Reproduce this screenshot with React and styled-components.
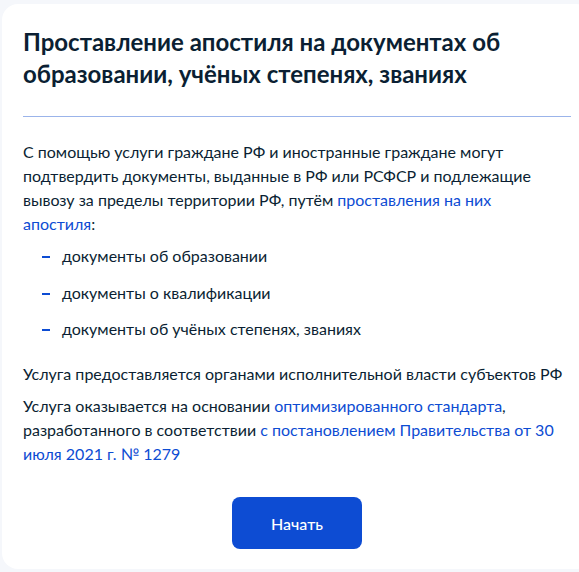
import React from "react";
import styled, { createGlobalStyle } from "styled-components";

const GlobalStyle = createGlobalStyle`
  html, body {
    margin: 0;
    padding: 0;
    background: #f5f7fb;
    overflow: hidden;
  }
  body {
    font-family: Lato, "Noto Sans", "Liberation Sans", sans-serif;
    color: #0b1f33;
    -webkit-font-smoothing: antialiased;
  }
`;

const Page = styled.div`
  padding: 4px 0 0 2px;
  height: 572px;
  box-sizing: border-box;
`;

const Card = styled.section`
  width: 590px;
  box-sizing: border-box;
  background: #ffffff;
  border-radius: 16px;
  padding: 22px 21px 20px 21px;
  display: flex;
  flex-direction: column;
`;

const Title = styled.h1`
  margin: 0;
  font-size: 24px;
  line-height: 32px;
  font-weight: 700;
  color: #0b1f33;
`;

const Divider = styled.hr`
  margin: 26px 0 23px;
  width: 100%;
  border: 0;
  height: 1px;
  background: #9bb4ea;
`;

const Text = styled.p`
  margin: 0;
  max-width: ${(p) => (p.$wide ? "none" : "540px")};
  font-size: 16px;
  line-height: 24px;
  margin-top: ${(p) => p.$top || 0}px;
`;

const Link = styled.a`
  color: #0d4cd3;
  text-decoration: none;
  cursor: pointer;
`;

const List = styled.ul`
  list-style: none;
  margin: 8px 0 0;
  padding: 0;
  display: flex;
  flex-direction: column;
  gap: 12.5px;
`;

const Item = styled.li`
  display: flex;
  align-items: center;
  font-size: 16px;
  line-height: 24px;
`;

const Dash = styled.span`
  flex: none;
  width: 8px;
  height: 2px;
  margin: 2px 12px 0 19px;
  background: #0d4cd3;
`;

const Actions = styled.div`
  display: flex;
  justify-content: center;
  margin-top: 31px;
`;

const Button = styled.button`
  width: 130px;
  height: 52px;
  border: 0;
  border-radius: 8px;
  background: #0d4cd3;
  color: #ffffff;
  font-family: Lato, "Noto Sans", "Liberation Sans", sans-serif;
  font-size: 16px;
  font-weight: 500;
  cursor: pointer;
`;

const items = [
  "документы об образовании",
  "документы о квалификации",
  "документы об учёных степенях, званиях",
];

export default function App() {
  return (
    <>
      <GlobalStyle />
      <Page>
        <Card>
          <Title>Проставление апостиля на документах об образовании, учёных степенях, званиях</Title>
          <Divider />
          <Text>
            С помощью услуги граждане РФ и иностранные граждане могут подтвердить документы, выданные в РФ или
            РСФСР и подлежащие вывозу за пределы территории РФ, путём{" "}
            <Link>проставления на них апостиля</Link>:
          </Text>
          <List>
            {items.map((t) => (
              <Item key={t}>
                <Dash />
                {t}
              </Item>
            ))}
          </List>
          <Text $wide $top={21}>
            Услуга предоставляется органами исполнительной власти субъектов РФ
          </Text>
          <Text $top={8}>
            Услуга оказывается на основании <Link>оптимизированного стандарта</Link>, разработанного в
            соответствии <Link>с постановлением Правительства от 30 июля 2021 г. № 1279</Link>
          </Text>
          <Actions>
            <Button>Начать</Button>
          </Actions>
        </Card>
      </Page>
    </>
  );
}
